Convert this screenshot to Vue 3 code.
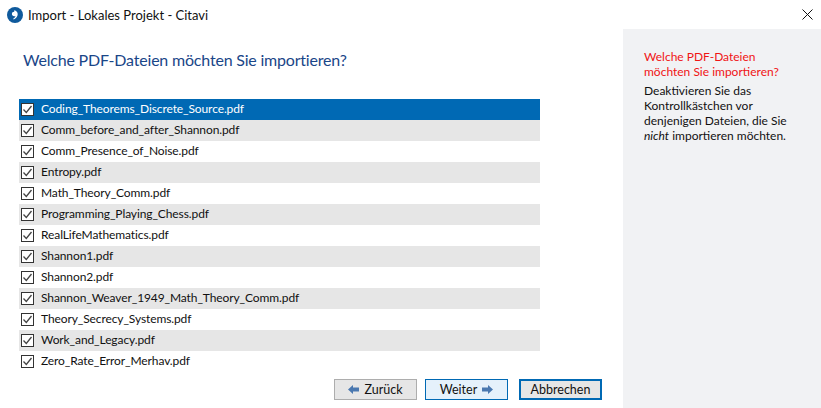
<script setup>
const files = [
  'Coding_Theorems_Discrete_Source.pdf',
  'Comm_before_and_after_Shannon.pdf',
  'Comm_Presence_of_Noise.pdf',
  'Entropy.pdf',
  'Math_Theory_Comm.pdf',
  'Programming_Playing_Chess.pdf',
  'RealLifeMathematics.pdf',
  'Shannon1.pdf',
  'Shannon2.pdf',
  'Shannon_Weaver_1949_Math_Theory_Comm.pdf',
  'Theory_Secrecy_Systems.pdf',
  'Work_and_Legacy.pdf',
  'Zero_Rate_Error_Merhav.pdf'
]
</script>

<template>
  <div class="window">
    <header class="titlebar">
      <svg class="logo" width="16" height="16" viewBox="0 0 16 16">
        <circle cx="8" cy="8" r="8" fill="#0f5a9c" />
        <path d="M7.200 3.300c2.300.6 3.500 2 3.500 3.900 0 2.200-1.500 4-4 5.300l-.5-.8c1.300-.9 2.100-1.800 2.300-2.800-.4.200-.8.300-1.300.3-1.300 0-2.300-.9-2.300-2.200 0-1.300.9-2.200 2.300-2.200z" fill="#fff" />
      </svg>
      <span class="title">Import - Lokales Projekt - Citavi</span>
      <svg class="close" width="11" height="11" viewBox="0 0 11 11">
        <path d="M.5.5l10 10M10.500.5l-10 10" stroke="#111" stroke-width="1" fill="none" />
      </svg>
    </header>
    <div class="body">
      <main class="main">
        <h1 class="heading">Welche PDF-Dateien möchten Sie importieren?</h1>
        <ul class="list">
          <li v-for="(f, i) in files" :key="f" class="row" :class="{ selected: i === 0, alt: i % 2 === 1 }">
            <svg class="check" width="13" height="13" viewBox="0 0 13 13">
              <rect x=".5" y=".5" width="12" height="12" fill="#fff" stroke="#333" />
              <path d="M2.500 6.500l2.800 3 5.200-6.500" fill="none" stroke="#444" stroke-width="1.300" />
            </svg>
            <span>{{ f }}</span>
          </li>
        </ul>
        <div class="buttons">
          <button class="btn back">
            <svg width="11" height="9" viewBox="0 0 11 9"><path d="M0 4.500L5 0v2.500h6v4H5V9z" fill="#4a78b0" /></svg>
            Zurück
          </button>
          <button class="btn next">
            Weiter
            <svg width="11" height="9" viewBox="0 0 11 9"><path d="M11 4.500L6 0v2.500H0v4h6V9z" fill="#4a78b0" /></svg>
          </button>
          <button class="btn cancel">Abbrechen</button>
        </div>
      </main>
      <aside class="help">
        <p class="help-title">Welche PDF-Dateien möchten Sie importieren?</p>
        <p class="help-text">Deaktivieren Sie das Kontrollkästchen vor denjenigen Dateien, die Sie <em>nicht</em> importieren möchten.</p>
      </aside>
    </div>
  </div>
</template>

<style>
html, body { margin: 0; background: #fff; }
</style>

<style scoped>
.window {
  width: 821px;
  height: 408px;
  overflow: hidden;
  display: flex;
  flex-direction: column;
  font-family: Lato, "Noto Sans", sans-serif;
  font-size: 12px;
  color: #111;
}
.titlebar {
  height: 29px;
  flex: none;
  display: flex;
  align-items: center;
  padding: 0 8px 0 7px;
  box-sizing: border-box;
}
.title { margin-left: 5px; font-size: 13px; flex: 1; }
.body { flex: 1; display: flex; min-height: 0; }
.main { width: 623px; flex: none; box-sizing: border-box; padding-left: 19px; }
.heading {
  margin: 20px 0 0 4px;
  font-size: 16px;
  letter-spacing: -0.2px;
  line-height: 22px;
  font-weight: 400;
  color: #1a4688;
}
.list { list-style: none; margin: 28px 0 0; padding: 0; width: 521px; letter-spacing: -0.1px; }
.row {
  height: 21px;
  display: flex;
  align-items: center;
  padding-left: 2px;
  box-sizing: border-box;
}
.row span { margin-left: 7px; padding-bottom: 2px; }
.row.alt { background: #e6e6e6; }
.row.selected { background: #0069b4; color: #fff; }
.check { flex: none; }
.buttons { display: flex; margin: 7px 0 0 315px; }
.btn {
  width: 83px;
  height: 21px;
  padding: 0;
  box-sizing: border-box;
  font: inherit;
  font-size: 12.500px;
  color: #111;
  display: flex;
  align-items: center;
  justify-content: center;
  gap: 5px;
  background: #e6e6e6;
  border: 1px solid #adadad;
}
.next { margin-left: 8px; background: #e5f1fb; border-color: #0069b4; }
.cancel { margin-left: 11px; border: 2px solid #0069b4; }
.help { flex: 1; background: #f1f2f4; padding: 20px 20px 0 21px; }
.help p { margin: 0; line-height: 15.300px; }
.help-title { color: #f01414; margin-bottom: 3px !important; }
</style>
